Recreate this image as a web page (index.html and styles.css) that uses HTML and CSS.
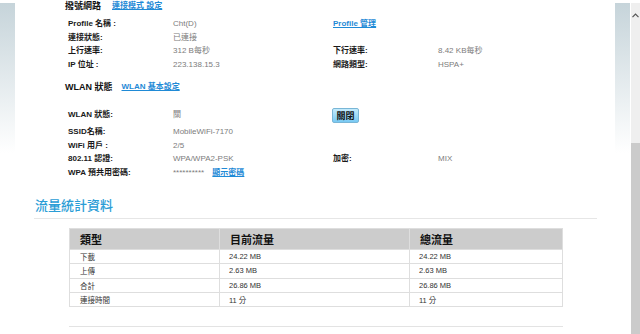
FILE: index.html
```html
<!DOCTYPE html>
<html lang="zh-Hant">
<head>
    <meta charset="UTF-8">
    <title>狀態</title>
    <link rel="stylesheet" href="styles.css">
</head>
<body>
    <div class="side side-left"></div>
    <div class="main">
        <div class="section-head">
            <span class="section-title">撥號網路</span>
            <a class="link" href="#">連接模式 設定</a>
        </div>
        <div class="info-grid">
            <div class="label">Profile 名稱 :</div>
            <div class="value">Cht(D)</div>
            <div class="label"><a class="link" href="#">Profile 管理</a></div>
            <div class="value"></div>

            <div class="label">連接狀態:</div>
            <div class="value">已連接</div>
            <div></div>
            <div></div>

            <div class="label">上行速率:</div>
            <div class="value">312 B每秒</div>
            <div class="label">下行速率:</div>
            <div class="value">8.42 KB每秒</div>

            <div class="label">IP 位址 :</div>
            <div class="value">223.138.15.3</div>
            <div class="label">網路類型:</div>
            <div class="value">HSPA+</div>
        </div>

        <div class="section-head wlan-head">
            <span class="section-title">WLAN 狀態</span>
            <a class="link" href="#">WLAN 基本設定</a>
        </div>
        <div class="info-grid wlan-grid">
            <div class="label tall">WLAN 狀態:</div>
            <div class="value tall">關</div>
            <div class="label tall"><button class="btn">關閉</button></div>
            <div class="value tall"></div>

            <div class="label">SSID名稱:</div>
            <div class="value">MobileWiFi-7170</div>
            <div></div>
            <div></div>

            <div class="label">WiFi 用戶 :</div>
            <div class="value">2/5</div>
            <div></div>
            <div></div>

            <div class="label">802.11 認證:</div>
            <div class="value">WPA/WPA2-PSK</div>
            <div class="label">加密:</div>
            <div class="value">MIX</div>

            <div class="label">WPA 預共用密碼:</div>
            <div class="value">********** <a class="link pw-link" href="#">顯示密碼</a></div>
            <div></div>
            <div></div>
        </div>

        <h2 class="stats-title">流量統計資料</h2>
        <table class="stats">
            <thead>
                <tr>
                    <th class="col-type">類型</th>
                    <th class="col-now">目前流量</th>
                    <th>總流量</th>
                </tr>
            </thead>
            <tbody>
                <tr><td>下載</td><td>24.22 MB</td><td>24.22 MB</td></tr>
                <tr><td>上傳</td><td>2.63 MB</td><td>2.63 MB</td></tr>
                <tr><td>合計</td><td>26.86 MB</td><td>26.86 MB</td></tr>
                <tr><td>連接時間</td><td>11 分</td><td>11 分</td></tr>
            </tbody>
        </table>
        <div class="bottom-rule"></div>
    </div>
    <div class="side side-right"></div>
    <div class="scrollbar">
        <div class="scroll-track">
            <svg class="arrow" width="7" height="5" viewBox="0 0 7 5"><path d="M0.5 4.2 L3.5 1.2 L6.5 4.2" fill="none" stroke="#555" stroke-width="1.2"/></svg>
        </div>
        <div class="scroll-thumb"></div>
    </div>
</body>
</html>
```

FILE: styles.css
```css
body {
    margin: 0;
    height: 334px;
    overflow: hidden;
    display: flex;
    background: #fff;
    font-family: "Liberation Sans", "Noto Sans CJK TC", sans-serif;
    color: #222;
}

.side {
    width: 15px;
    flex-shrink: 0;
    margin-top: 3px;
    height: 150px;
    background: linear-gradient(#c6d4da, #fff);
}

.main {
    width: 600px;
    flex-shrink: 0;
}

.scrollbar {
    width: 9px;
    margin-left: 1px;
    display: flex;
    flex-direction: column;
}

.scroll-track {
    height: 140px;
    margin-top: 3px;
    background: #efefef;
    display: flex;
    justify-content: center;
    padding-top: 10px;
    box-sizing: border-box;
}

.arrow {
    display: block;
}

.scroll-thumb {
    flex: 1;
    background: #cbcbcb;
}

.section-head {
    padding-left: 50px;
    height: 12px;
    line-height: 12px;
    display: flex;
    align-items: center;
}

.section-title {
    font-size: 9px;
    font-weight: bold;
    color: #111;
    margin-right: 11px;
}

.link {
    color: #1f8ad6;
    font-size: 8px;
    font-weight: bold;
    text-decoration: underline;
}

.wlan-head {
    margin-top: 10px;
}

.wlan-head .section-title {
    margin-right: 9px;
}

.info-grid {
    display: grid;
    grid-template-columns: 105px 160px 105px 1fr;
    padding-left: 53px;
    margin-top: 5px;
    font-size: 8px;
    line-height: 13.5px;
}

.wlan-grid {
    margin-top: 12px;
}

.label {
    font-weight: bold;
    color: #1a1a1a;
}

.value {
    color: #7c7c7c;
}

.tall {
    height: 20px;
    display: flex;
    align-items: center;
}

.btn {
    margin-left: -1px;
    width: 27px;
    height: 15px;
    padding: 0;
    border: 1px solid #79b6d6;
    border-radius: 2px;
    background: linear-gradient(#c4ebfc, #78c9f3);
    font-family: "Liberation Sans", "Noto Sans CJK TC", sans-serif;
    font-size: 9px;
    font-weight: bold;
    color: #111;
}

.pw-link {
    margin-left: 6px;
}

.stats-title {
    margin: 18px 18px 0 19px;
    padding: 0 0 3px 1px;
    font-size: 13px;
    line-height: 18px;
    font-weight: 500;
    color: #2a9dd6;
    border-bottom: 1px solid #e6e6e6;
}

.stats {
    margin: 9px 0 0 54px;
    width: 494px;
    border-collapse: collapse;
    font-size: 7.5px;
    color: #333;
}

.stats th {
    background: #cccccc;
    height: 20px;
    padding: 0 0 0 10px;
    text-align: left;
    font-size: 11px;
    color: #111;
    border: 1px solid #dedede;
}

.col-type {
    width: 139px;
}

.col-now {
    width: 179px;
}

.stats td {
    height: 13.3px;
    padding: 0 0 0 9px;
    border: 1px solid #dedede;
}

.stats td:first-child {
    padding-left: 10px;
}

.bottom-rule {
    margin: 19px 0 0 54px;
    width: 494px;
    border-top: 1px solid #e3e3e3;
}
```
